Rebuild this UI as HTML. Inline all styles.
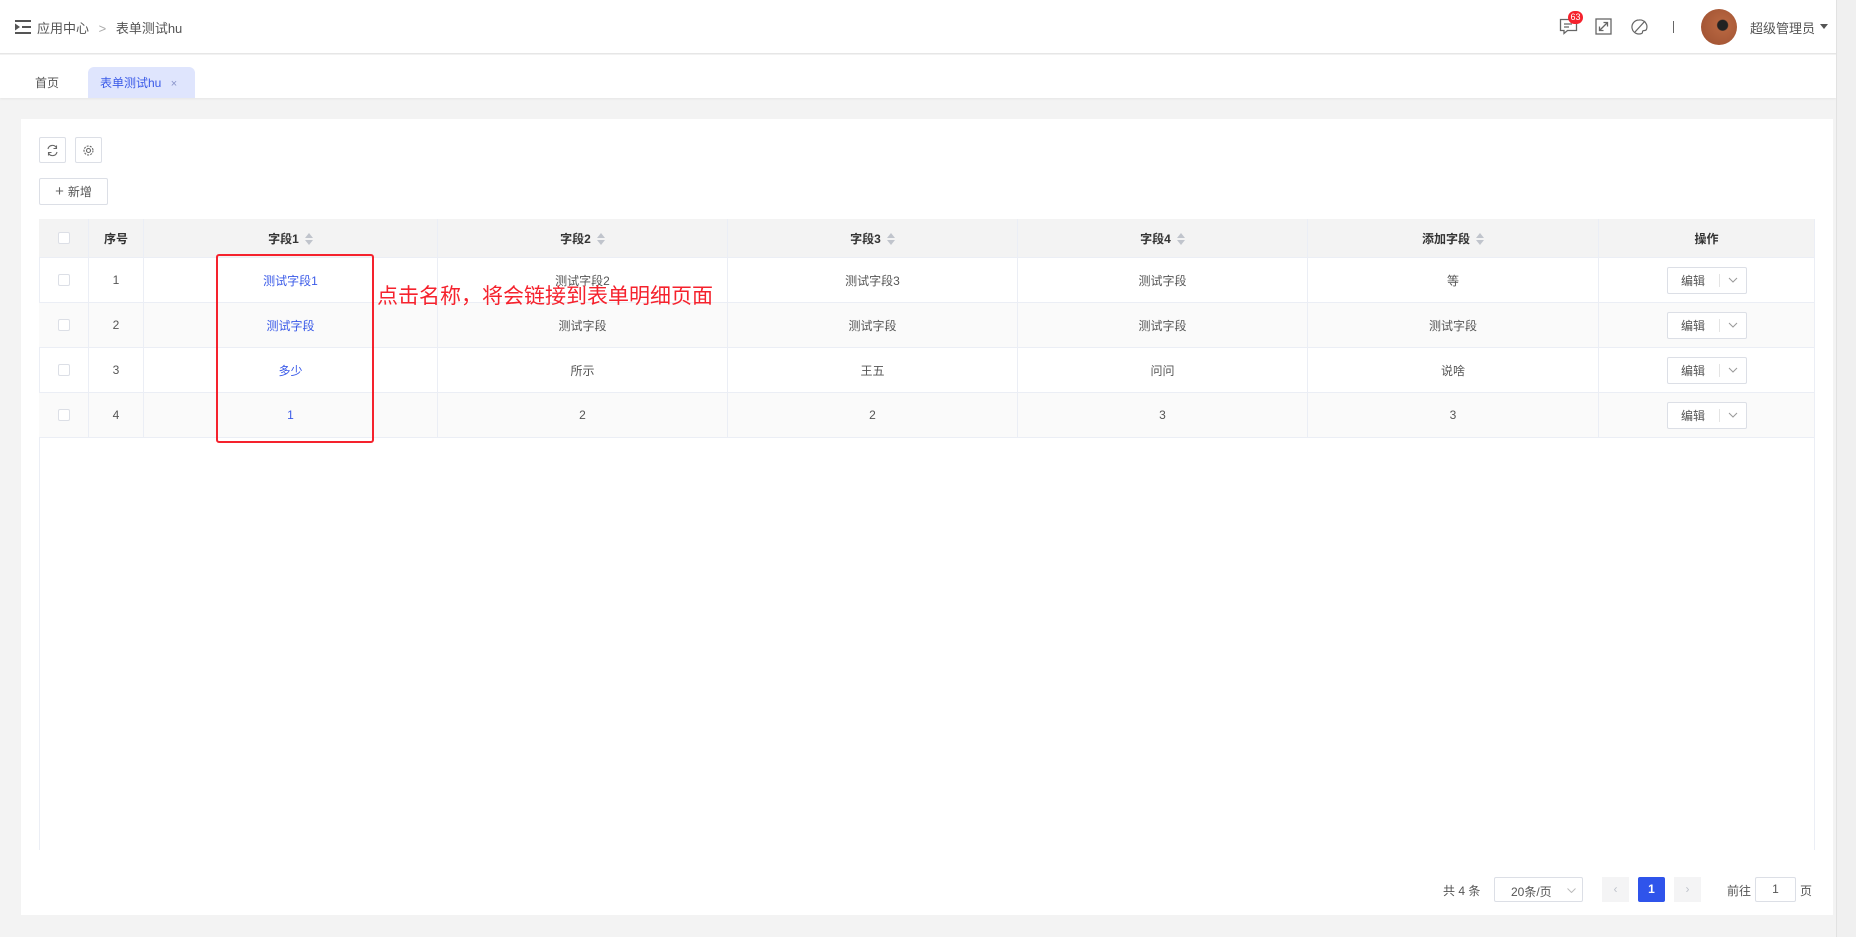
<!DOCTYPE html>
<html><head><meta charset="utf-8"><style>
*{box-sizing:border-box;margin:0;padding:0}
body{width:1856px;height:937px;background:#f3f3f3;font-family:"Liberation Sans","Noto Sans CJK SC",sans-serif;color:#555;font-size:12px;position:relative;overflow:hidden}
.a{position:absolute}
.hdr{left:0;top:0;width:1836px;height:54px;background:#fff;border-bottom:1px solid #e6e6e6}
.tabs{left:0;top:55px;width:1836px;height:43px;background:#fff;box-shadow:0 1px 2px rgba(0,0,0,.06)}
.sb{left:1836px;top:0;width:20px;height:937px;background:#f0f0f0;border-left:1px solid #e2e2e2}
.card{left:21px;top:119px;width:1812px;height:796px;background:#fff}
.btn{border:1px solid #dcdfe6;background:#fff;border-radius:2px}
.cell{position:absolute;display:flex;align-items:center;justify-content:center;border-right:1px solid #ebeef5;border-bottom:1px solid #ebeef5}
.th{background:#f3f3f3;font-weight:bold;color:#333}
.cb{width:12px;height:12px;border:1px solid #dcdfe6;border-radius:2px;background:#fff}
.sort{display:inline-block;margin-left:6px;width:0;height:0;border-left:4px solid transparent;border-right:4px solid transparent;border-bottom:5px solid #c0c4cc;position:relative;top:-3px}
.sort:after{content:"";position:absolute;left:-4px;top:7px;border-left:4px solid transparent;border-right:4px solid transparent;border-top:5px solid #c0c4cc}
.lnk{color:#3a5ae8}
.edit{width:80px;height:27px;border:1px solid #dcdfe6;border-radius:2px;background:#fff;display:flex;font-size:12px;color:#555}
.edit span{display:flex;align-items:center;justify-content:center}
</style></head><body>
<div class="a hdr"></div>
<svg class="a" style="left:15px;top:20px" width="16" height="14" viewBox="0 0 16 14"><rect x="0" y="0" width="16" height="2" fill="#555"/><rect x="7" y="6" width="9" height="2" fill="#555"/><rect x="0" y="12" width="16" height="2" fill="#555"/><path d="M0 3.5L5 7 0 10.5z" fill="#555"/></svg>
<div class="a" style="left:37px;top:18px;font-size:13px;color:#555">应用中心 <span style="color:#aaa;margin:0 6px">&gt;</span> 表单测试hu</div>
<svg class="a" style="left:1559px;top:17px" width="20" height="18" viewBox="0 0 20 18"><path d="M1.5 2.5h16v11h-9l-3.5 3v-3h-3.5z" fill="none" stroke="#666" stroke-width="1.3"/><path d="M5 7h8M5 10h5" stroke="#666" stroke-width="1.3"/></svg>
<div class="a" style="left:1568px;top:11px;width:15px;height:13px;border-radius:7px;background:#f5222d;color:#fff;font-size:9px;text-align:center;line-height:13px">63</div>
<svg class="a" style="left:1595px;top:18px" width="17" height="17" viewBox="0 0 17 17"><rect x="1" y="1" width="15" height="15" fill="none" stroke="#666" stroke-width="1.3"/><path d="M4.5 12.5l8-8M8.5 4.5h4v4M4.5 8.5v4h4" fill="none" stroke="#666" stroke-width="1.3"/></svg>
<svg class="a" style="left:1630px;top:18px" width="18" height="18" viewBox="0 0 18 18"><path d="M9 2a7 7 0 1 0 3 13.3c1-0.5 0-2 1-2.5 1.5-.7 3 .2 3.5-1.5A7 7 0 0 0 9 2z" fill="none" stroke="#666" stroke-width="1.2"/><path d="M5 14L15 3" stroke="#666" stroke-width="1.3"/></svg>
<div class="a" style="left:1673px;top:21px;width:1px;height:12px;background:#666"></div>
<div class="a" style="left:1701px;top:9px;width:36px;height:36px;border-radius:50%;background:radial-gradient(circle at 60% 45%,#222 0 5px,#b5643f 6px,#9c4f30 100%)"></div>
<div class="a" style="left:1750px;top:18px;font-size:13px;color:#555">超级管理员</div>
<div class="a" style="left:1820px;top:24px;border-left:4px solid transparent;border-right:4px solid transparent;border-top:5px solid #555"></div>
<div class="a tabs"></div>
<div class="a" style="left:35px;top:74px;font-size:12px;color:#555">首页</div>
<div class="a" style="left:88px;top:67px;width:107px;height:31px;background:#dfe5fd;border-radius:6px 6px 0 0"></div>
<div class="a" style="left:100px;top:74px;font-size:12px;color:#3a5ae8">表单测试hu <span style="color:#8893c9;margin-left:6px;font-size:11px">×</span></div>
<div class="a sb"></div>
<div class="a card"></div>
<div class="a btn" style="left:39px;top:137px;width:27px;height:26px"></div>
<svg class="a" style="left:46px;top:144px" width="13" height="13" viewBox="0 0 13 13"><path d="M2 5A4.5 4.5 0 0 1 10.5 4M11 8A4.5 4.5 0 0 1 2.5 9" fill="none" stroke="#666" stroke-width="1.1"/><path d="M10.5 1.5v3h-3M2.5 11.5v-3h3" fill="none" stroke="#666" stroke-width="1.1"/></svg>
<div class="a btn" style="left:75px;top:137px;width:27px;height:26px"></div>
<svg class="a" style="left:82px;top:144px" width="13" height="13" viewBox="0 0 13 13"><circle cx="6.5" cy="6.5" r="4.5" fill="none" stroke="#666" stroke-width="1.1" stroke-dasharray="2 1.2"/><circle cx="6.5" cy="6.5" r="2" fill="none" stroke="#666" stroke-width="1.1"/></svg>
<div class="a btn" style="left:39px;top:178px;width:69px;height:27px;display:flex;align-items:center;justify-content:center;font-size:12px;color:#555"><span style="font-size:15px;margin-right:4px;color:#666">+</span>新增</div>

<div class="a" style="left:39px;top:219px;width:1776px;height:631px;border-left:1px solid #ebeef5;border-top:1px solid #ebeef5;border-right:1px solid #ebeef5"></div>

<div class="cell th" style="left:39px;top:219px;width:50px;height:39px"><div class="cb"></div></div>
<div class="cell th" style="left:89px;top:219px;width:55px;height:39px">序号</div>
<div class="cell th" style="left:144px;top:219px;width:294px;height:39px">字段1<i class="sort"></i></div>
<div class="cell th" style="left:438px;top:219px;width:290px;height:39px">字段2<i class="sort"></i></div>
<div class="cell th" style="left:728px;top:219px;width:290px;height:39px">字段3<i class="sort"></i></div>
<div class="cell th" style="left:1018px;top:219px;width:290px;height:39px">字段4<i class="sort"></i></div>
<div class="cell th" style="left:1308px;top:219px;width:291px;height:39px">添加字段<i class="sort"></i></div>
<div class="cell th" style="left:1599px;top:219px;width:216px;height:39px">操作</div>

<div class="a" style="left:39px;top:303px;width:1776px;height:45px;background:#fafafa"></div>
<div class="a" style="left:39px;top:393px;width:1776px;height:45px;background:#fafafa"></div>

<div class="cell" style="left:39px;top:258px;width:50px;height:45px"><div class="cb"></div></div>
<div class="cell" style="left:89px;top:258px;width:55px;height:45px">1</div>
<div class="cell lnk" style="left:144px;top:258px;width:294px;height:45px">测试字段1</div>
<div class="cell" style="left:438px;top:258px;width:290px;height:45px">测试字段2</div>
<div class="cell" style="left:728px;top:258px;width:290px;height:45px">测试字段3</div>
<div class="cell" style="left:1018px;top:258px;width:290px;height:45px">测试字段</div>
<div class="cell" style="left:1308px;top:258px;width:291px;height:45px">等</div>
<div class="cell" style="left:1599px;top:258px;width:216px;height:45px"><div class="edit"><span style="width:52px;border-right:1px solid #e4e4e4;margin:6px 0">编辑</span><span style="flex:1"><svg width="10" height="6" viewBox="0 0 10 6"><path d="M1 1l4 4 4-4" fill="none" stroke="#999"/></svg></span></div></div>

<div class="cell" style="left:39px;top:303px;width:50px;height:45px"><div class="cb"></div></div>
<div class="cell" style="left:89px;top:303px;width:55px;height:45px">2</div>
<div class="cell lnk" style="left:144px;top:303px;width:294px;height:45px">测试字段</div>
<div class="cell" style="left:438px;top:303px;width:290px;height:45px">测试字段</div>
<div class="cell" style="left:728px;top:303px;width:290px;height:45px">测试字段</div>
<div class="cell" style="left:1018px;top:303px;width:290px;height:45px">测试字段</div>
<div class="cell" style="left:1308px;top:303px;width:291px;height:45px">测试字段</div>
<div class="cell" style="left:1599px;top:303px;width:216px;height:45px"><div class="edit"><span style="width:52px;border-right:1px solid #e4e4e4;margin:6px 0">编辑</span><span style="flex:1"><svg width="10" height="6" viewBox="0 0 10 6"><path d="M1 1l4 4 4-4" fill="none" stroke="#999"/></svg></span></div></div>

<div class="cell" style="left:39px;top:348px;width:50px;height:45px"><div class="cb"></div></div>
<div class="cell" style="left:89px;top:348px;width:55px;height:45px">3</div>
<div class="cell lnk" style="left:144px;top:348px;width:294px;height:45px">多少</div>
<div class="cell" style="left:438px;top:348px;width:290px;height:45px">所示</div>
<div class="cell" style="left:728px;top:348px;width:290px;height:45px">王五</div>
<div class="cell" style="left:1018px;top:348px;width:290px;height:45px">问问</div>
<div class="cell" style="left:1308px;top:348px;width:291px;height:45px">说啥</div>
<div class="cell" style="left:1599px;top:348px;width:216px;height:45px"><div class="edit"><span style="width:52px;border-right:1px solid #e4e4e4;margin:6px 0">编辑</span><span style="flex:1"><svg width="10" height="6" viewBox="0 0 10 6"><path d="M1 1l4 4 4-4" fill="none" stroke="#999"/></svg></span></div></div>

<div class="cell" style="left:39px;top:393px;width:50px;height:45px"><div class="cb"></div></div>
<div class="cell" style="left:89px;top:393px;width:55px;height:45px">4</div>
<div class="cell lnk" style="left:144px;top:393px;width:294px;height:45px">1</div>
<div class="cell" style="left:438px;top:393px;width:290px;height:45px">2</div>
<div class="cell" style="left:728px;top:393px;width:290px;height:45px">2</div>
<div class="cell" style="left:1018px;top:393px;width:290px;height:45px">3</div>
<div class="cell" style="left:1308px;top:393px;width:291px;height:45px">3</div>
<div class="cell" style="left:1599px;top:393px;width:216px;height:45px"><div class="edit"><span style="width:52px;border-right:1px solid #e4e4e4;margin:6px 0">编辑</span><span style="flex:1"><svg width="10" height="6" viewBox="0 0 10 6"><path d="M1 1l4 4 4-4" fill="none" stroke="#999"/></svg></span></div></div>

<div class="a" style="left:216px;top:254px;width:158px;height:189px;border:2px solid #f5222d;border-radius:3px"></div>
<div class="a" style="left:377px;top:285px;font-size:21px;color:#f5222d;white-space:nowrap;line-height:24px">点击名称，将会链接到表单明细页面</div>

<div class="a" style="left:1443px;top:882px;font-size:12px">共 4 条</div>
<div class="a btn" style="left:1494px;top:877px;width:89px;height:25px;font-size:12px;padding:5px 0 0 16px">20条/页<svg style="position:absolute;right:6px;top:10px" width="9" height="5" viewBox="0 0 9 5"><path d="M.5.5l4 4 4-4" fill="none" stroke="#bbb"/></svg></div>
<div class="a" style="left:1602px;top:877px;width:27px;height:25px;background:#f4f4f5;color:#c0c4cc;text-align:center;line-height:25px">‹</div>
<div class="a" style="left:1638px;top:877px;width:27px;height:25px;background:#2f54eb;color:#fff;text-align:center;line-height:25px;font-weight:bold;border-radius:2px">1</div>
<div class="a" style="left:1674px;top:877px;width:27px;height:25px;background:#f4f4f5;color:#c0c4cc;text-align:center;line-height:25px">›</div>
<div class="a" style="left:1727px;top:882px;font-size:12px">前往</div>
<div class="a btn" style="left:1755px;top:877px;width:41px;height:25px;text-align:center;line-height:23px">1</div>
<div class="a" style="left:1800px;top:882px;font-size:12px">页</div>
</body></html>
